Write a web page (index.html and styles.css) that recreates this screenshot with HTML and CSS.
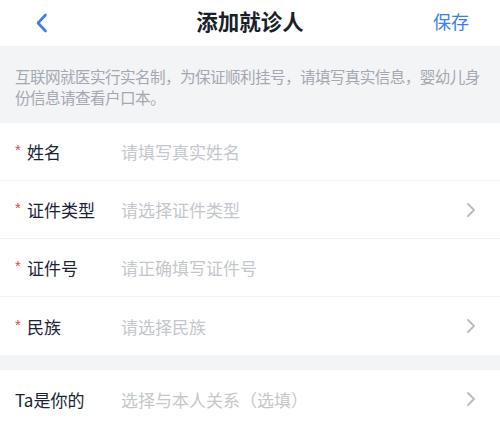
FILE: index.html
```html
<!DOCTYPE html>
<html lang="zh-CN">
<head>
<meta charset="utf-8">
<link rel="stylesheet" href="styles.css">
</head>
<body>
<div class="page">
  <header class="nav">
    <span class="back">
      <svg width="14" height="20" viewBox="0 0 14 20"><path d="M10.5 2 L3 10 L10.5 18" fill="none" stroke="#3a7ef2" stroke-width="2.6" stroke-linecap="round" stroke-linejoin="round"/></svg>
    </span>
    <h1 class="title">添加就诊人</h1>
    <span class="save">保存</span>
  </header>
  <div class="notice">互联网就医实行实名制，为保证顺利挂号，请填写真实信息，婴幼儿身份信息请查看户口本。</div>
  <div class="group">
    <div class="row"><span class="label"><i class="req">*</i>姓名</span><span class="ph">请填写真实姓名</span></div>
    <div class="row"><span class="label"><i class="req">*</i>证件类型</span><span class="ph">请选择证件类型</span><span class="arrow"><svg width="10" height="16" viewBox="0 0 10 16"><path d="M2 2 L8 8 L2 14" fill="none" stroke="#bbbec4" stroke-width="2" stroke-linecap="round" stroke-linejoin="round"/></svg></span></div>
    <div class="row"><span class="label"><i class="req">*</i>证件号</span><span class="ph">请正确填写证件号</span></div>
    <div class="row last"><span class="label"><i class="req">*</i>民族</span><span class="ph">请选择民族</span><span class="arrow"><svg width="10" height="16" viewBox="0 0 10 16"><path d="M2 2 L8 8 L2 14" fill="none" stroke="#bbbec4" stroke-width="2" stroke-linecap="round" stroke-linejoin="round"/></svg></span></div>
  </div>
  <div class="gap"></div>
  <div class="group">
    <div class="row last"><span class="label plain">Ta是你的</span><span class="ph">选择与本人关系（选填）</span><span class="arrow"><svg width="10" height="16" viewBox="0 0 10 16"><path d="M2 2 L8 8 L2 14" fill="none" stroke="#bbbec4" stroke-width="2" stroke-linecap="round" stroke-linejoin="round"/></svg></span></div>
  </div>
</div>
</body>
</html>
```
FILE: styles.css
```css
* { box-sizing: border-box; margin: 0; padding: 0; }
body {
  background: #ffffff;
  font-family: "Noto Sans CJK SC", "Noto Sans", sans-serif;
  width: 500px;
  overflow: hidden;
}
.page { width: 500px; }
.nav {
  height: 46px;
  display: flex;
  align-items: center;
  justify-content: space-between;
  position: relative;
  padding: 0 31px 0 35px;
  background: #fff;
}
.back { display: flex; align-items: center; height: 20px; }
.title {
  position: absolute;
  left: 0; right: 0;
  text-align: center;
  font-size: 21.5px;
  font-weight: 700;
  color: #1a1f2b;
  line-height: 46px;
  top: -2px;
  pointer-events: none;
}
.save {
  font-size: 18px;
  color: #3a7ef2;
  line-height: 46px;
  margin-top: -4px;
}
.notice {
  background: #f3f4f6;
  color: #a4a8b0;
  font-size: 15.6px;
  letter-spacing: -0.6px;
  line-height: 21px;
  padding: 20px 10px 15px 15px;
  height: 77px;
}
.group { background: #fff; }
.row {
  height: 58px;
  display: flex;
  align-items: center;
  padding: 0 24px 0 15px;
  border-bottom: 1px solid #f1f2f4;
}
.row.last { border-bottom: none; }
.label {
  width: 106px;
  flex: none;
  font-size: 17px;
  font-weight: 400;
  color: #1a2436;
  display: flex;
  align-items: center;
}
.req {
  font-style: normal;
  color: #e2483a;
  font-size: 15px;
  width: 12px;
  margin-top: -4px;
  font-family: "Liberation Sans", sans-serif;
}
.ph {
  flex: 1;
  font-size: 17px;
  color: #c4c7cd;
}
.arrow { display: flex; align-items: center; }
.gap { height: 15px; background: #f3f4f6; }
```
